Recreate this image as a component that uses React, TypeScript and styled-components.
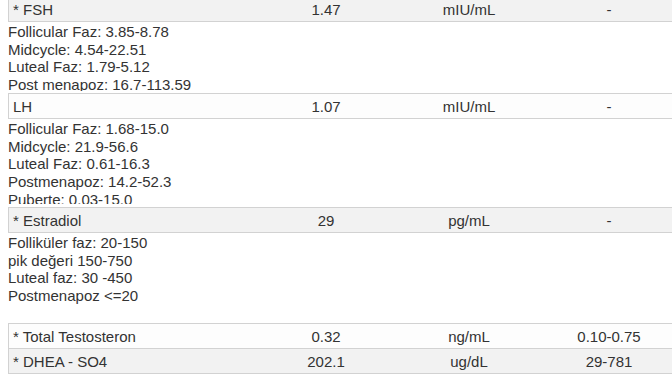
import React from "react";
import styled, { createGlobalStyle } from "styled-components";

const GlobalStyle = createGlobalStyle`
  html, body {
    margin: 0;
    padding: 0;
    background: #fff;
    overflow: hidden;
  }
  body {
    font-family: "Liberation Sans", Arial, sans-serif;
    font-size: 15px;
    color: #333;
  }
`;

const Page = styled.div`
  margin: -4px 0 0 8px;
  width: 669px;
`;

const Row = styled.div<{ $shade: boolean }>`
  display: grid;
  grid-template-columns: 246px 142px 144px 136px;
  height: 24px;
  align-items: center;
  background: ${(p) => (p.$shade ? "#f2f2f2" : "#fdfdfd")};
  border: 1px solid #d2d2d2;
  border-right: none;

  & + & {
    border-top: none;
  }
`;

const Cell = styled.div<{ $center?: boolean }>`
  padding: 0 4px;
  white-space: nowrap;
  text-align: ${(p) => (p.$center ? "center" : "left")};
`;

const Notes = styled.div<{ $h: number; $gap: number }>`
  height: ${(p) => p.$h}px;
  margin-bottom: ${(p) => p.$gap}px;
  overflow: hidden;
  padding-top: 1px;
  box-sizing: border-box;
  line-height: 17.7px;
`;

type Test = {
  name: string;
  value: string;
  unit: string;
  range: string;
  notes?: string[];
  notesHeight?: number;
  notesGap?: number;
};

const tests: Test[] = [
  {
    name: "* FSH",
    value: "1.47",
    unit: "mIU/mL",
    range: "-",
    notes: [
      "Follicular Faz: 3.85-8.78",
      "Midcycle: 4.54-22.51",
      "Luteal Faz: 1.79-5.12",
      "Post menapoz: 16.7-113.59",
    ],
    notesHeight: 69,
    notesGap: 2,
  },
  {
    name: "LH",
    value: "1.07",
    unit: "mIU/mL",
    range: "-",
    notes: [
      "Follicular Faz: 1.68-15.0",
      "Midcycle: 21.9-56.6",
      "Luteal Faz: 0.61-16.3",
      "Postmenapoz: 14.2-52.3",
      "Puberte: 0.03-15.0",
    ],
    notesHeight: 85,
    notesGap: 3,
  },
  {
    name: "* Estradiol",
    value: "29",
    unit: "pg/mL",
    range: "-",
    notes: [
      "Folliküler faz: 20-150",
      "pik değeri 150-750",
      "Luteal faz: 30 -450",
      "Postmenapoz <=20",
    ],
    notesHeight: 90,
    notesGap: 0,
  },
  { name: "* Total Testosteron", value: "0.32", unit: "ng/mL", range: "0.10-0.75" },
  { name: "* DHEA - SO4", value: "202.1", unit: "ug/dL", range: "29-781" },
];

export default function App() {
  return (
    <>
      <GlobalStyle />
      <Page>
        {tests.map((t, i) => (
          <React.Fragment key={t.name}>
            <Row $shade={i % 2 === 0}>
              <Cell>{t.name}</Cell>
              <Cell $center>{t.value}</Cell>
              <Cell $center>{t.unit}</Cell>
              <Cell $center>{t.range}</Cell>
            </Row>
            {t.notes && (
              <Notes $h={t.notesHeight ?? 70} $gap={t.notesGap ?? 0}>
                {t.notes.map((n) => (
                  <div key={n}>{n}</div>
                ))}
              </Notes>
            )}
          </React.Fragment>
        ))}
      </Page>
    </>
  );
}
